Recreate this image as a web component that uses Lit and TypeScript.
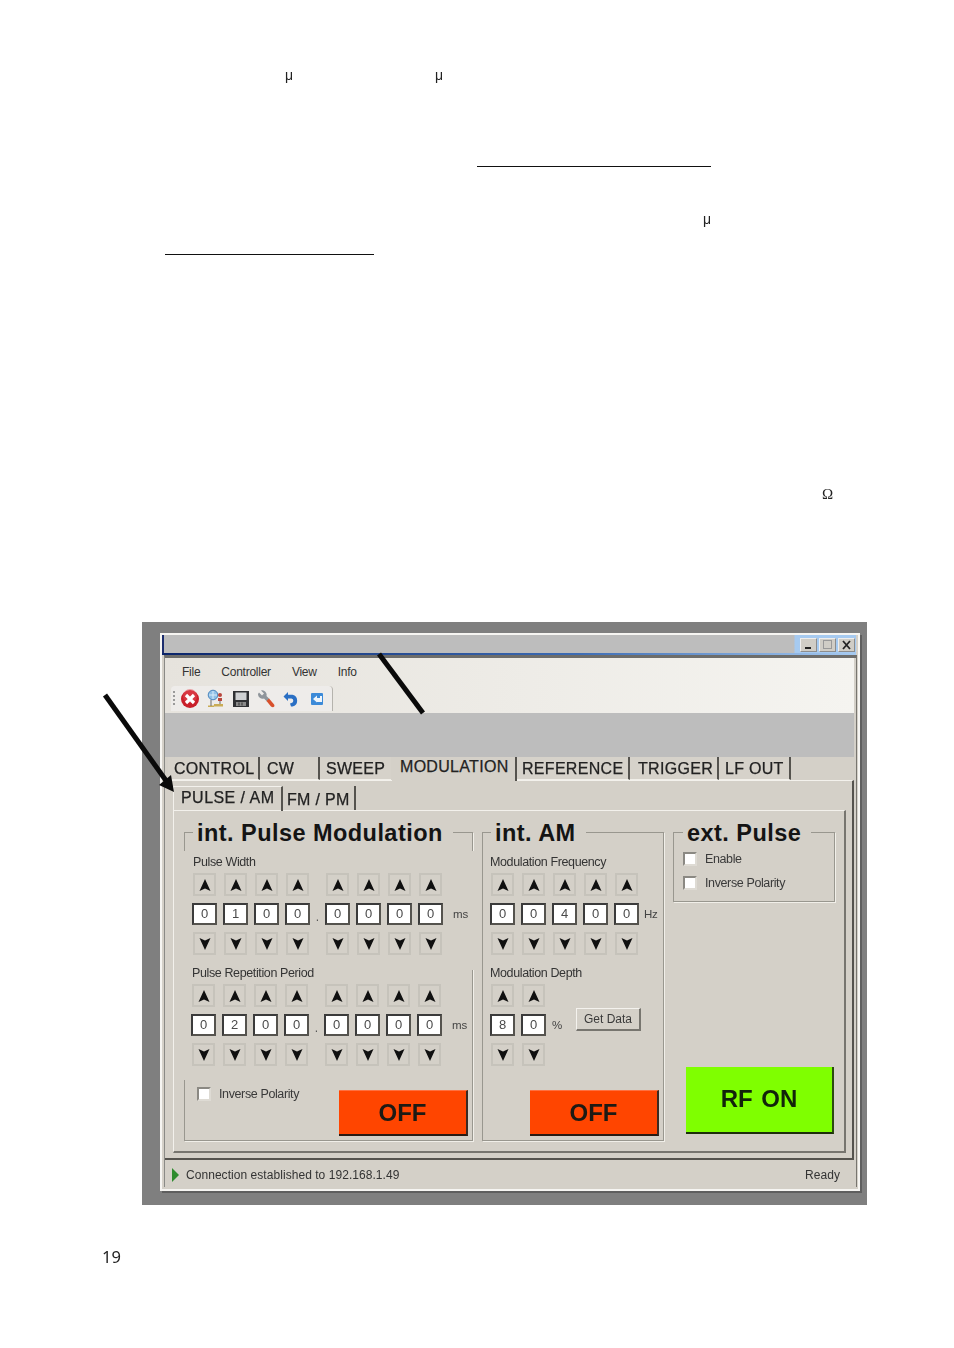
import { LitElement, html, css, svg } from "lit";
import { customElement } from "lit/decorators.js";

const up = html`<svg class="arr" viewBox="0 0 12 12"><path d="M6 0 L11.5 12 L6 9.6 L.5 12Z"/></svg>`;
const down = html`<svg class="arr" viewBox="0 0 12 12"><path d="M6 12 L.5 0 L6 2.4 L11.5 0Z"/></svg>`;

function spinner(digits: string, unit: string, cls: string, dotAfter = -1) {
  const cells = (f: (c: string) => unknown) =>
    digits.split("").flatMap((c, i) => (i === dotAfter ? [html`<i></i>`, f(c)] : [f(c)]));
  return html`<div class="spin ${cls}">
    ${cells(() => html`<span class="btn">${up}</span>`)}<i></i>
    ${digits.split("").flatMap((c, i) => {
      const d = html`<span class="digit">${c}</span>`;
      return i === dotAfter ? [html`<b class="dot">.</b>`, d] : [d];
    })}<span class="unit">${unit}</span>
    ${cells(() => html`<span class="btn">${down}</span>`)}<i></i>
  </div>`;
}

const tabs: [string, number, number, string][] = [
  ["CONTROL", 92, 6, ""], ["CW", 60, 7, ""], ["SWEEP", 71, 6, "end"], ["MODULATION", 125, 8, "sel"],
  ["REFERENCE", 113, 5, ""], ["TRIGGER", 89, 8, ""], ["LF OUT", 72, 6, ""],
];

@customElement("app-root")
export class AppRoot extends LitElement {
  static styles = css`
    :host { display: block; position: relative; width: 954px; height: 1348px; background: #fff; overflow: hidden; font-family: "Liberation Sans", Arial, sans-serif; }
    .shot { width: 725px; height: 583px; box-sizing: border-box; margin: 0 0 0 142px; position: relative; top: 622px; background: #7f7f7f; padding: 11px 0 0 18px; }
    .win { width: 700px; height: 558px; box-sizing: border-box; background: #d4d0c8; border: 2px solid #f6f5f2; box-shadow: 2px 2px 0 #5e5e5e; filter: blur(.35px); color: #2b2b2b; }
    .title { height: 18px; margin-right: 2px; background: linear-gradient(90deg,#bdbdbd 0,#bdbdbd 630px,#a6caf0 631px); border-left: 2px solid #1c2d6e; display: flex; justify-content: flex-end; gap: 2px; padding: 3px 1px 0 0; box-sizing: border-box; }
    .tb { width: 17px; height: 14px; background: #d0cdc6; border: 1px solid #8d8d8d; border-top-color: #eee; border-left-color: #eee; box-sizing: border-box; display: flex; align-items: center; justify-content: center; }
    .tb svg { width: 11px; height: 10px; display: block; }
    .blue { height: 2px; margin-right: 2px; background: linear-gradient(90deg,#0a246a,#3d6cb4 60%,#a6caf0); }
    .client { margin: 0 1px 0 2px; border-top: 3px solid #6d6d6b; border-left: 1px solid #8a8a86; border-right: 1px solid #77756f; }
    .menuzone { height: 55px; margin-right: 2px; background: linear-gradient(90deg,#e6e3dd,#f5f4f0); }
    .menu { display: flex; height: 28px; align-items: center; padding: 0 0 0 17px; font-size: 12px; letter-spacing: -.25px; color: #333; }
    .menu span { margin-right: 21px; }
    .toolbar { width: 162px; height: 25px; margin-left: 6px; background: #eeecea; border-radius: 4px 4px 0 0; border-right: 1px solid #b5b3ad; display: flex; align-items: center; box-sizing: border-box; }
    .grip { width: 2px; height: 16px; margin: 0 5px 0 2px; background: repeating-linear-gradient(180deg,#9a9a9a 0 2px,transparent 2px 4px); }
    .toolbar svg { width: 20px; height: 20px; display: block; flex: none; margin-right: 5px; }
    .band { height: 44px; margin-right: 2px; background: #bdbdbd; }
    .tabs { display: flex; height: 23px; padding-left: 3px; }
    .tab { box-sizing: border-box; font-size: 16px; letter-spacing: .3px; -webkit-text-stroke: .25px #222; line-height: 23px; border-right: 2px solid #55534e; border-bottom: 1px solid #f1efe9; color: #222; white-space: nowrap; background: #d6d2ca; }
    .tab.end { border-right: none; }
    .tab.sel { line-height: 19px; background: #d4d0c8; border-bottom: none; position: relative; z-index: 1; height: 24px; margin-left: 1px; }
    .panel { height: 380px; margin-right: 2px; box-sizing: border-box; border-top: 1px solid #f3f1ec; border-right: 2px solid #55534e; border-bottom: 2px solid #55534e; padding: 5px 6px 0 8px; }
    .subtabs { display: flex; height: 24px; }
    .sub { font-size: 16px; box-sizing: border-box; white-space: nowrap; color: #222; -webkit-text-stroke: .25px #222; }
    .sub.sel { width: 110px; padding: 2px 0 0 7px; letter-spacing: .45px; border-top: 1px solid #f3f1ec; border-left: 1px solid #f3f1ec; border-right: 2px solid #55534e; position: relative; z-index: 1; height: 25px; line-height: 18px; }
    .sub.other { width: 73px; padding: 4px 0 0 4px; letter-spacing: .3px; border-right: 2px solid #55534e; line-height: 19px; }
    .inner { height: 343px; box-sizing: border-box; border: 1px solid #f3f1ec; border-right: 2px solid #77756f; border-bottom: 2px solid #77756f; display: flex; padding: 21px 0 0 10px; gap: 9px; }
    .group { position: relative; box-sizing: border-box; height: 309px; border: 1px solid #99978f; box-shadow: 1px 1px 0 #f1efe9; padding: 22px 4px 0 7px; flex: none; }
    .g1 { width: 289px; }
    .g2 { width: 182px; }
    .col3 { width: 162px; height: 309px; display: flex; flex-direction: column; flex: none; }
    .g3 { width: 162px; height: 70px; padding: 19px 4px 0 9px; }
    .legend { position: absolute; top: -13px; background: #d4d0c8; font-size: 23.5px; font-weight: 700; line-height: 26px; color: #141414; padding: 0 10px 0 4px; letter-spacing: .45px; white-space: nowrap; }
    .mask { position: absolute; width: 5px; background: #d4d0c8; top: 18px; }
    .mask.l { left: -3px; height: 229px; }
    .mask.r { right: -3px; height: 119px; }
    .lbl { height: 14px; line-height: 14px; font-size: 12.5px; letter-spacing: -.38px; color: #343434; margin: 0 0 4px 1px; white-space: nowrap; }
    .lbl.after { margin: 11px 0 4px 0; }
    .lbl.first { margin-left: 0; }
    .spin { display: grid; grid-template-rows: 23px 22px 23px; row-gap: 7px; column-gap: 6px; align-items: center; justify-items: center; }
    .spin i { display: block; }
    .s8 { grid-template-columns: repeat(4,25px) 3px repeat(4,25px) 20px; }
    .s5 { grid-template-columns: repeat(5,25px) 20px; }
    .s2 { grid-template-columns: repeat(2,25px) 10px; }
    .shift { margin-left: -1px; }
    .btn { width: 23px; height: 23px; box-sizing: border-box; border: 2px solid #c6c3bb; display: flex; align-items: center; justify-content: center; }
    .arr { width: 12px; height: 12px; display: block; fill: #101010; }
    .digit { width: 25px; height: 22px; box-sizing: border-box; background: #fff; border: 2px solid #3b3b3b; border-right-color: #55534e; border-bottom-color: #55534e; text-align: center; font-size: 13px; line-height: 18px; color: #4a4a4a; }
    .dot { font-size: 12px; font-weight: 400; color: #555; align-self: end; line-height: 16px; }
    .unit { font-size: 11.5px; letter-spacing: -.2px; color: #444; justify-self: start; white-space: nowrap; }
    .s5 .unit { margin-left: -1px; }
    .s8 .unit { margin-left: 4px; }
    .btm { display: flex; align-items: flex-start; }
    .check { display: flex; align-items: center; font-size: 12.5px; letter-spacing: -.38px; color: #3a3a3a; white-space: nowrap; }
    .box { width: 14px; height: 14px; box-sizing: border-box; background: #fff; border: 2px solid #8b8983; border-right-color: #dedbd4; border-bottom-color: #dedbd4; margin-right: 8px; flex: none; }
    .chk1 { margin: 21px 0 0 5px; }
    .chk2 { height: 14px; }
    .chk3 { height: 14px; margin-top: 10px; }
    .off { width: 129px; height: 46px; box-sizing: border-box; background: #ff4500; border-right: 2px solid #3a2a22; border-bottom: 2px solid #2a1a12; border-top: 1px solid #ff7040; text-align: center; font-size: 24px; line-height: 44px; font-weight: 700; color: #1d1a14; margin-left: auto; }
    .off.a { margin-top: 24px; }
    .depth { display: flex; align-items: flex-start; }
    .get { width: 65px; height: 23px; box-sizing: border-box; margin: 24px 0 0 14px; background: #d4d0c8; border: 1px solid #f4f2ee; border-right: 2px solid #77756f; border-bottom: 2px solid #77756f; font-size: 12px; line-height: 21px; text-align: center; color: #3a3a3a; white-space: nowrap; }
    .rf { width: 148px; height: 67px; margin: auto 1px 7px auto; box-sizing: border-box; background: #7fff00; border-right: 2px solid #2c4a10; border-bottom: 2px solid #1d2f0a; text-align: center; font-size: 24px; word-spacing: 2px; line-height: 64px; font-weight: 700; color: #12240a; }
    .status { height: 27px; display: flex; align-items: center; font-size: 12px; letter-spacing: .05px; color: #333; margin-right: 2px; padding: 2px 14px 0 7px; box-sizing: border-box; }
    .status svg { width: 7px; height: 14px; margin-right: 7px; }
    .status .ready { margin-left: auto; }
    .marks { position: absolute; left: 0; top: 0; pointer-events: none; }
    .g { position: absolute; font-family: "Liberation Serif", serif; font-size: 15px; color: #222; line-height: 16px; filter: grayscale(1); }
    .g.mu { font-family: "Liberation Sans", sans-serif; font-size: 14px; }
    .rule { position: absolute; height: 1px; background: #111; }
    .pageno { position: absolute; left: 102px; top: 1248px; font: 16.5px/18px "Noto Sans", sans-serif; color: #222; filter: grayscale(1); }
  `;

  render() {
    return html`
      <span class="g mu" style="left:285px;top:67px">μ</span>
      <span class="g mu" style="left:435px;top:67px">μ</span>
      <span class="g mu" style="left:703px;top:211px">μ</span>
      <span class="g" style="left:822px;top:486px">Ω</span>
      <div class="rule" style="left:477px;top:166px;width:234px"></div>
      <div class="rule" style="left:165px;top:254px;width:209px"></div>
      <div class="shot">
        <div class="win">
          <div class="title">
            <span class="tb"><svg viewBox="0 0 11 10"><rect x="2" y="7" width="6" height="2" fill="#222"/></svg></span>
            <span class="tb"><svg viewBox="0 0 11 10"><rect x="1.5" y=".5" width="8" height="8" fill="none" stroke="#999"/></svg></span>
            <span class="tb"><svg viewBox="0 0 11 10"><path d="M2 1 L9 9 M9 1 L2 9" stroke="#222" stroke-width="1.8"/></svg></span>
          </div>
          <div class="blue"></div>
          <div class="client">
            <div class="menuzone">
              <div class="menu"><span>File</span><span>Controller</span><span>View</span><span>Info</span></div>
              <div class="toolbar">
                <span class="grip"></span>
                <svg viewBox="0 0 20 20"><circle cx="10" cy="10" r="9" fill="#c91f2a"/><circle cx="10" cy="7" r="7" fill="#e8505a" opacity=".5"/><path d="M6 6 L14 14 M14 6 L6 14" stroke="#fff" stroke-width="3.2"/></svg>
                <svg viewBox="0 0 20 20" style="margin-left:1px"><circle cx="7" cy="6" r="4.8" fill="#8fc0e8" stroke="#4c86bd"/><path d="M3 6h8M7 2v8" stroke="#d8ecfa"/><circle cx="14" cy="6" r="2" fill="#b8473e"/><path d="M12 9h4v3h-4z" fill="#b8473e"/><path d="M8 15h9v2.4H8zM2 16.5h6V18H2z" fill="#c9ac55"/><path d="M5 11v6M14 12v3" stroke="#6a6a6a"/></svg>
                <svg viewBox="0 0 20 20"><path d="M2 2h16v16H2z" fill="#2f3033"/><rect x="4.5" y="3.5" width="11" height="7.5" fill="#cfd1d3"/><rect x="5" y="13" width="10" height="4" fill="#8a8a8a"/><path d="M8 13.5v3M11 13.5v3" stroke="#333"/></svg>
                <svg viewBox="0 0 20 20"><path d="M2 5 A4.5 4.5 0 0 0 8 9.5 L11 12.5 L13.5 10 L10.5 7 A4.5 4.5 0 0 0 5 1.5 L8 4.5 L6 6.5 L3 3.5Z" fill="#8f959b"/><path d="M10.5 12 L15 17.5 Q17 19 18.3 17.5 Q19 15.8 17.5 14.8 L13 9.5Z" fill="#d8502c"/></svg>
                <svg viewBox="0 0 20 20"><path d="M7 3 L2.5 7.5 L7 12 V9.5 H10.5 A2.3 2.3 0 0 1 10.5 14 L9 14.5 L10 17.5 H11.5 A6 6 0 0 0 11.5 5.8 H7Z" fill="#2a6fc4"/></svg>
                <svg viewBox="0 0 20 20" style="margin-left:1px"><rect x="4" y="4" width="12" height="12" rx="1" fill="#3c8ad8"/><path d="M6 10 L10 6.5 V9 H13 V7 H15 V13 H10 V13.5Z" fill="#eef5fc"/></svg>
              </div>
            </div>
            <div class="band"></div>
            <div class="tabs">
              ${tabs.map(([t, w, p, c]) => html`<div class="tab ${c}" style="width:${w}px;padding-left:${p}px">${t}</div>`)}
            </div>
            <div class="panel">
              <div class="subtabs">
                <div class="sub sel">PULSE / AM</div>
                <div class="sub other">FM / PM</div>
              </div>
              <div class="inner">
                <div class="group g1">
                  <span class="legend" style="left:8px">int. Pulse Modulation</span>
                  <span class="mask l"></span><span class="mask r"></span>
                  <div class="lbl">Pulse Width</div>
                  ${spinner("01000000", "ms", "s8", 4)}
                  <div class="lbl after">Pulse Repetition Period</div>
                  ${spinner("02000000", "ms", "s8 shift", 4)}
                  <div class="btm">
                    <div class="check chk1"><span class="box"></span>Inverse Polarity</div>
                    <div class="off a">OFF</div>
                  </div>
                </div>
                <div class="group g2">
                  <span class="legend" style="left:8px">int. AM</span>
                  <div class="lbl first">Modulation Frequency</div>
                  ${spinner("00400", "Hz", "s5")}
                  <div class="lbl after">Modulation Depth</div>
                  <div class="depth">
                    ${spinner("80", "%", "s2")}
                    <div class="get">Get Data</div>
                  </div>
                  <div class="off a">OFF</div>
                </div>
                <div class="col3">
                  <div class="group g3">
                    <span class="legend" style="left:9px">ext. Pulse</span>
                    <div class="check chk2"><span class="box"></span>Enable</div>
                    <div class="check chk3"><span class="box"></span>Inverse Polarity</div>
                  </div>
                  <div class="rf">RF ON</div>
                </div>
              </div>
            </div>
            <div class="status">
              <svg viewBox="0 0 7 14"><path d="M0 0 L7 7 L0 14Z" fill="#2e8b2e"/></svg>
              Connection established to 192.168.1.49
              <span class="ready">Ready</span>
            </div>
          </div>
        </div>
      </div>
      <svg class="marks" width="954" height="1348" viewBox="0 0 954 1348">
        ${svg`<path d="M379 654 L423 713" stroke="#0a0a0a" stroke-width="5" fill="none"/>
        <path d="M105 695 L167 782" stroke="#0a0a0a" stroke-width="5" fill="none"/>
        <path d="M174 792 L159 785 L171 775Z" fill="#0a0a0a"/>`}
      </svg>
      <div class="pageno">19</div>
    `;
  }
}
